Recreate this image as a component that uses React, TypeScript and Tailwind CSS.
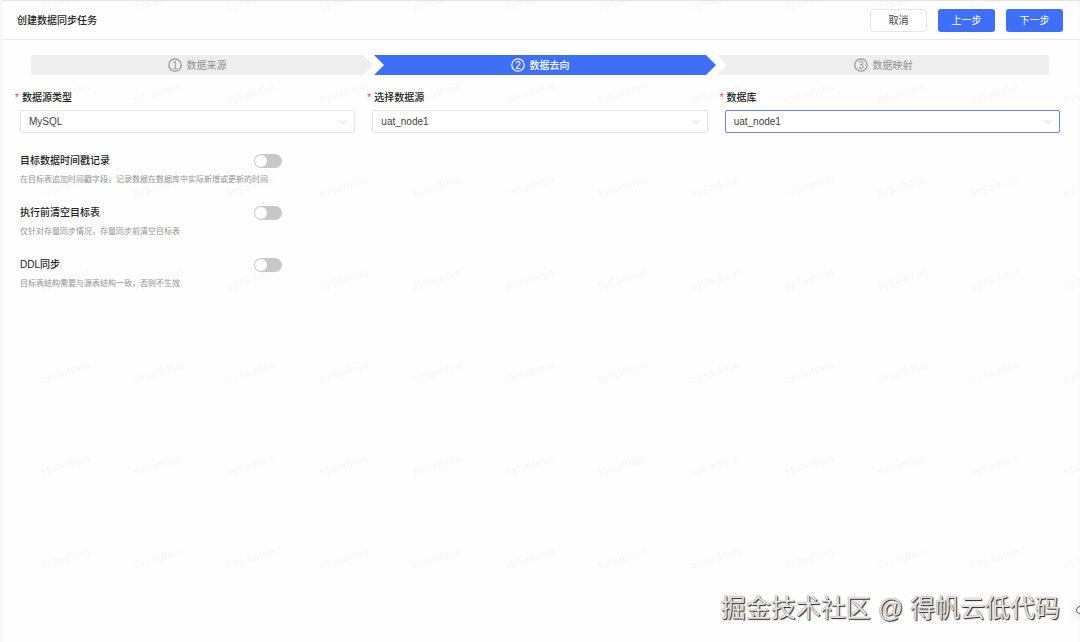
import { ChevronDown } from 'lucide-react';

const steps = [
  { number: 1, title: '数据来源' },
  { number: 2, title: '数据去向' },
  { number: 3, title: '数据映射' },
];

const fields = [
  { id: 'source-type', label: '数据源类型', value: 'MySQL', border: 'border-[#e4e5e9]' },
  { id: 'source', label: '选择数据源', value: 'uat_node1', border: 'border-[#e4e5e9]' },
  { id: 'database', label: '数据库', value: 'uat_node1', border: 'border-[#6b86e0]' },
];

const options = [
  {
    id: 'timestamp',
    title: '目标数据时间戳记录',
    description: '在目标表追加时间戳字段，记录数据在数据库中实际新增或更新的时间',
  },
  {
    id: 'truncate',
    title: '执行前清空目标表',
    description: '仅针对存量同步情况，存量同步前清空目标表',
  },
  {
    id: 'ddl',
    title: 'DDL同步',
    description: '目标表结构需要与源表结构一致，否则不生效',
  },
];

function Header() {
  return (
    <header className="flex items-center justify-between border-b border-[#e9e9ea] pt-[9px] pr-[17px] pb-[7px] pl-[15px]">
      <h1 className="font-medium text-[#222222]">创建数据同步任务</h1>
      <div className="flex gap-[11px]">
        <button className="h-[23px] w-[57px] rounded-[3px] border border-[#e6e6e8] bg-white">取消</button>
        <button className="h-[23px] w-[57px] rounded-[3px] bg-[#3f6ff6] text-white">上一步</button>
        <button className="h-[23px] w-[57px] rounded-[3px] bg-[#3f6ff6] text-white">下一步</button>
      </div>
    </header>
  );
}

function Steps() {
  // arrow heads reach into the gap and the notch of the next step
  const shapes = [
    '-mr-[10px] pr-[10px] rounded-l-[2px] bg-[#eeeeee] text-[#929292] [clip-path:polygon(0_0,calc(100%-10px)_0,100%_50%,calc(100%-10px)_100%,0_100%)]',
    '-mr-[10px] pr-[10px] bg-[#3f6ff6] font-medium text-white [clip-path:polygon(0_0,calc(100%-10px)_0,100%_50%,calc(100%-10px)_100%,0_100%,10px_50%)]',
    'rounded-r-[2px] bg-[#eeeeee] text-[#929292] [clip-path:polygon(0_0,100%_0,100%_100%,0_100%,10px_50%)]',
  ];

  return (
    <ol className="mx-[11px] grid grid-cols-3 gap-[11px]">
      {steps.map((step, index) => (
        <li key={step.number} className={`flex h-5 items-center justify-center gap-[5px] ${shapes[index]}`}>
          <svg viewBox="0 0 14 14" className="size-[14px]" aria-hidden="true">
            <circle cx="7" cy="7" r="6.2" fill="none" stroke="currentColor" strokeWidth="1.2" />
            <text x="7" y="10.6" fontSize="10" textAnchor="middle" fill="currentColor">
              {step.number}
            </text>
          </svg>
          <span className="pt-[2px]">{step.title}</span>
        </li>
      ))}
    </ol>
  );
}

function Watermark() {
  return (
    <div className="pointer-events-none absolute inset-0 overflow-hidden" aria-hidden="true">
      <div className="-mt-[47px] ml-4 grid auto-rows-[93px] grid-cols-[repeat(12,93px)]">
        {Array.from({ length: 84 }, (_, index) => (
          <span key={index} className="flex -rotate-15 items-center justify-center text-xs text-black/5">
            sysadmin
          </span>
        ))}
      </div>
    </div>
  );
}

export default function App() {
  return (
    <div className="relative min-h-screen overflow-hidden border-l-2 border-l-[#f7f7f7] bg-[#fefefe] font-['Liberation_Sans','Noto_Sans_CJK_SC',sans-serif] text-[10px] leading-[14px] text-[#444444] shadow-[inset_0_1px_1px_#e4e4e4]">
      <Header />

      <main className="pt-[15px] pr-5 pl-[18px]">
        <Steps />

        <form>
          <div className="mt-4 grid grid-cols-3 gap-[17px]">
            {fields.map((field) => (
              <div key={field.id}>
                <label htmlFor={field.id} className="-ml-[5px] flex gap-[3px] font-medium text-[#222222]">
                  <span className="text-[#e5484d]">*</span>
                  {field.label}
                </label>
                <div className="relative mt-[5px]">
                  <select
                    id={field.id}
                    className={`h-[23px] w-full appearance-none rounded-[2px] border bg-white px-2 outline-none ${field.border}`}
                  >
                    <option>{field.value}</option>
                  </select>
                  <ChevronDown
                    className="pointer-events-none absolute top-[6px] right-[6px] size-3 text-[#c4c6cc]"
                    strokeWidth={1.5}
                  />
                </div>
              </div>
            ))}
          </div>

          <div className="mt-[21px] flex w-[262px] flex-col gap-5">
            {options.map((option) => (
              <div key={option.id}>
                <div className="flex h-[14px] items-center justify-between">
                  <label htmlFor={option.id} className="font-medium text-[#222222]">
                    {option.title}
                  </label>
                  <input
                    id={option.id}
                    type="checkbox"
                    role="switch"
                    className="relative h-[14px] w-7 appearance-none rounded-full bg-[#c8c8c8] before:absolute before:top-px before:left-px before:size-3 before:rounded-full before:bg-white checked:bg-[#3f6ff6] checked:before:left-[15px]"
                  />
                </div>
                <p className="mt-[6px] text-[8px] leading-3 whitespace-nowrap text-[#929292]">{option.description}</p>
              </div>
            ))}
          </div>
        </form>
      </main>

      <Watermark />

      <p className="absolute right-5 bottom-[18px] text-[25px] leading-8 text-[#e2e2e2] [text-shadow:1px_1px_1px_#222222,0_0_1px_#777777]">
        掘金技术社区 @ 得帆云低代码
      </p>
      <span className="absolute -right-1 bottom-[28px] size-2 rounded-full border border-[#555555] shadow-[0_2px_8px_#cccccc]" />
    </div>
  );
}
